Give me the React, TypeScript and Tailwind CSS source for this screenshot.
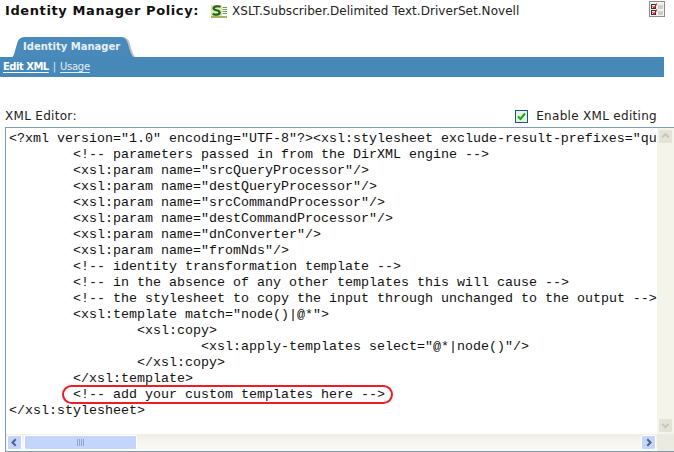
import React from 'react';

const lines: [number, string][] = [
  [0, '<?xml version="1.0" encoding="UTF-8"?><xsl:stylesheet exclude-result-prefixes="qu'],
  [1, '<!-- parameters passed in from the DirXML engine -->'],
  [1, '<xsl:param name="srcQueryProcessor"/>'],
  [1, '<xsl:param name="destQueryProcessor"/>'],
  [1, '<xsl:param name="srcCommandProcessor"/>'],
  [1, '<xsl:param name="destCommandProcessor"/>'],
  [1, '<xsl:param name="dnConverter"/>'],
  [1, '<xsl:param name="fromNds"/>'],
  [1, '<!-- identity transformation template -->'],
  [1, '<!-- in the absence of any other templates this will cause -->'],
  [1, '<!-- the stylesheet to copy the input through unchanged to the output -->'],
  [1, '<xsl:template match="node()|@*">'],
  [2, '<xsl:copy>'],
  [3, '<xsl:apply-templates select="@*|node()"/>'],
  [2, '</xsl:copy>'],
  [1, '</xsl:template>'],
];

const DocIcon: React.FC = () => (
  <svg width="16" height="13" viewBox="0 0 16 13" className="shrink-0">
    <rect x="0" y="0" width="11" height="12" fill="#dfe8a4" />
    <rect x="0" y="11" width="16" height="2" fill="#a4b45c" />
    <path d="M9.500 2 C8 0.800 3 1 2.500 3.200 C2.200 6 9 4.500 8.700 7.800 C8.300 10.200 3 10.200 1.800 8.600" fill="none" stroke="#17632a" strokeWidth="2.200" />
    <path d="M11.500 2.500h4.500M11.500 4.500h4.500M11.500 6.500h4.500M11.500 8.500h4.500" stroke="#6c9a58" strokeWidth="1" />
  </svg>
);

const ChecklistIcon: React.FC = () => (
  <svg width="16" height="16" viewBox="0 0 16 16" className="shrink-0">
    <rect x="0.500" y="0.500" width="15" height="15" fill="#f4f2ee" stroke="#8c8c8c" />
    <rect x="2.500" y="3.500" width="4" height="4" fill="#fff" stroke="#333" />
    <rect x="2.500" y="9.500" width="4" height="4" fill="#fff" stroke="#333" />
    <path d="M3.500 5l1.500 2 3-4.500M3.500 11l1.500 2 3-4.500" fill="none" stroke="#e02020" strokeWidth="1.200" />
    <path d="M9 5h5M9 7h5M9 11h5M9 13h5" stroke="#aaa" />
  </svg>
);

const Tab: React.FC = () => (
  <div className="relative ml-[12px] w-[122px] h-[20px] flex items-start">
    <svg width="124" height="20" viewBox="0 0 124 20" className="absolute left-0 top-0">
      <path d="M1 20 C3 20 4 13 6 7 C7 3 9 0 14 0 L110 0 C115 0 117 3 118 7 C120 14 122 20 124 20 Z" fill="#c4c4c4" />
      <path d="M0 20 C2 20 3 13 5 7 C6 3 8 0 13 0 L108 0 C113 0 115 3 116 7 C118 14 120 20 122 20 Z" fill="#4a8aba" />
    </svg>
    <span className="relative ml-[11px] font-bold text-[10px] leading-[16px] pt-[2px] text-[#e8f0f6] whitespace-nowrap">Identity Manager</span>
  </div>
);

const ScrollButton: React.FC<{ dir: 'up' | 'down' | 'left' | 'right'; active?: boolean }> = ({ dir, active }) => {
  const d = { up: 'M4 9l4-4 4 4', down: 'M4 6l4 4 4-4', left: 'M9.500 4l-4 4 4 4', right: 'M6.500 4l4 4-4 4' }[dir];
  return (
    <div
      className={
        active
          ? 'w-[15px] h-[15px] rounded-[2px] border border-white bg-[#c3d5fb] flex items-center justify-center'
          : 'w-[15px] h-[15px] rounded-[2px] border border-[#f4f3ee] bg-[#e4e3d8] flex items-center justify-center'
      }
    >
      <svg width="15" height="15" viewBox="0 0 16 16">
        <path d={d} fill="none" stroke={active ? '#4d6185' : '#c6c5b8'} strokeWidth="2.400" />
      </svg>
    </div>
  );
};

const App: React.FC = () => {
  return (
    <div className="w-[674px] h-[452px] overflow-hidden bg-white flex flex-col font-['DejaVu_Sans',sans-serif]">
      <div className="h-[22px] flex items-center pl-[5px] pr-[9px]">
        <span className="font-bold text-[13px] tracking-[0.600px] text-[#111] w-[206px] shrink-0 whitespace-nowrap">Identity Manager Policy:</span>
        <span className="mr-[5px]"><DocIcon /></span>
        <span className="text-[12px] text-[#222] tracking-[0.050px] whitespace-nowrap">XSLT.Subscriber.Delimited Text.DriverSet.Novell</span>
        <span className="ml-auto -mt-[5px]"><ChecklistIcon /></span>
      </div>
      <div className="h-[15px]" />
      <Tab />
      <div className="w-[664px] h-[20px] bg-[#4689b9] flex items-center pl-[3px] pb-[1px] text-[10px] text-white">
        <a className="font-bold tracking-[-0.500px] underline underline-offset-2">Edit XML</a>
        <span className="mx-[4px] text-[#dfeaf2]">|</span>
        <a className="underline tracking-[-0.300px] underline-offset-2 text-[#e4eef5]">Usage</a>
      </div>
      <div className="h-[29px]" />
      <div className="h-[21px] flex items-center justify-between pl-[5px] pr-[17px] pb-[1px] text-[12px] text-[#222] tracking-[0.300px]">
        <span>XML Editor:</span>
        <span className="flex items-center gap-[8px]">
          <span className="w-[13px] h-[13px] border border-[#1c5180] bg-[#e6f2e4] flex items-center justify-center">
            <svg width="11" height="11" viewBox="0 0 11 11">
              <path d="M2 5.500l2.500 2.500 4.500-5.500" fill="none" stroke="#21a121" strokeWidth="2" />
            </svg>
          </span>
          <span>Enable XML editing</span>
        </span>
      </div>
      <div className="ml-[5px] flex-1 min-h-0 border border-[#7f9db9] border-r-0 flex flex-col">
        <div className="flex-1 min-h-0 flex">
          <div className="flex-1 min-w-0 overflow-hidden pt-[3px] pl-[3px] font-['Liberation_Mono',monospace] text-[13.330px] leading-[16px] text-[#111] whitespace-pre">
            {lines.map(([depth, text], i) => (
              <div key={i} style={{ paddingLeft: depth * 64 }}>{text}</div>
            ))}
            <div className="pl-[64px]">
              <span className="relative">
                {'<!-- add your custom templates here -->'}
                <span className="absolute -left-[11px] -right-[8px] -top-[2px] -bottom-[2px] rounded-[11px] border-2 border-[#ee1c25]" />
              </span>
            </div>
            <div>{'</xsl:stylesheet>'}</div>
          </div>
          <div className="w-[17px] bg-[#f5f4ea] flex flex-col justify-between items-center py-[1px]">
            <ScrollButton dir="up" />
            <ScrollButton dir="down" />
          </div>
        </div>
        <div className="h-[17px] flex">
          <div className="flex-1 bg-gradient-to-b from-[#f1f0e6] to-[#fbfbf8] flex items-center justify-between px-[1px]">
            <div className="flex items-center gap-[2px]">
              <ScrollButton dir="left" active />
              <div className="w-[113px] h-[15px] rounded-[2px] border border-[#fff] bg-[#c3d5fb] flex items-center justify-center gap-[1px]">
                {[0, 1, 2, 3].map(i => <span key={i} className="w-[1px] h-[7px] bg-[#8ca5d6]" />)}
              </div>
            </div>
            <ScrollButton dir="right" active />
          </div>
          <div className="w-[17px] bg-[#ecebe0]" />
        </div>
      </div>
    </div>
  );
};

export default App;
